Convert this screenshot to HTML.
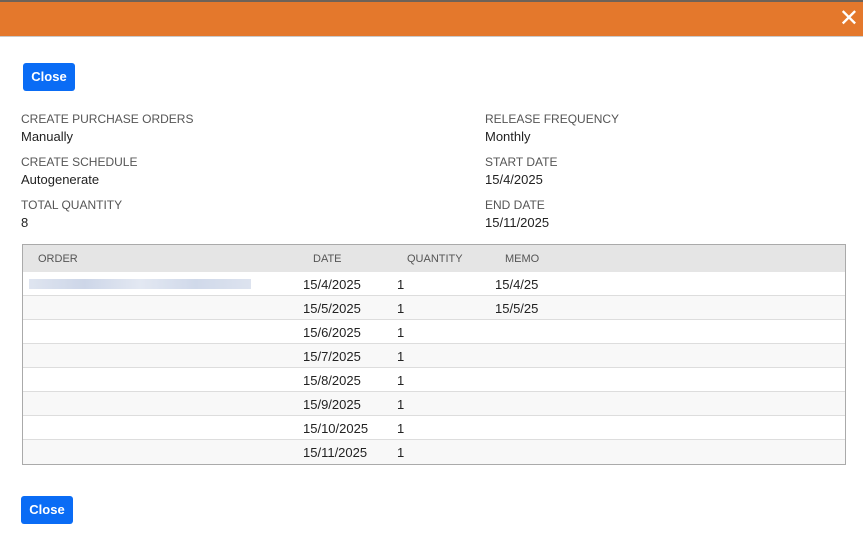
<!DOCTYPE html><html><head><style>
body{margin:0;width:863px;height:536px;background:#fff;font-family:"Liberation Sans",sans-serif;position:relative;overflow:hidden;color:#222}
.hd{position:absolute;left:0;top:0;width:863px;height:37px;background:#e4782c;border-top:2px solid #6e6258;box-sizing:border-box;border-bottom:1px solid #c9c9c9}
.x{position:absolute;right:4px;top:4px;color:#fff;font-size:24px;line-height:26px}
.btn{position:absolute;background:#0a6cf5;color:#fff;font-weight:bold;font-size:13px;border-radius:3px;text-align:center;line-height:28px;height:28px}
.l{position:absolute;font-size:12px;color:#555}
.v{position:absolute;font-size:13px;color:#222}
.tb{position:absolute;left:22px;top:244px;width:824px;border:1px solid #aaa;box-sizing:border-box}
.th{height:27px;background:#e5e5e5;position:relative}
.r{height:24px;border-bottom:1px solid #ddd;box-sizing:border-box;position:relative;font-size:13px}
.c{position:absolute;top:5px}
.h{position:absolute;top:8px;font-size:11px;color:#555}
</style></head><body>
<div class="hd"><span class="x">✕</span></div>
<div class="btn" style="left:23px;top:63px;width:52px">Close</div>
<div class="l" style="left:21px;top:112px">CREATE PURCHASE ORDERS</div><div class="v" style="left:21px;top:129px">Manually</div>
<div class="l" style="left:21px;top:155px">CREATE SCHEDULE</div><div class="v" style="left:21px;top:172px">Autogenerate</div>
<div class="l" style="left:21px;top:198px">TOTAL QUANTITY</div><div class="v" style="left:21px;top:215px">8</div>
<div class="l" style="left:485px;top:112px">RELEASE FREQUENCY</div><div class="v" style="left:485px;top:129px">Monthly</div>
<div class="l" style="left:485px;top:155px">START DATE</div><div class="v" style="left:485px;top:172px">15/4/2025</div>
<div class="l" style="left:485px;top:198px">END DATE</div><div class="v" style="left:485px;top:215px">15/11/2025</div>
<div class="tb">
<div class="th"><span class="h" style="left:15px">ORDER</span><span class="h" style="left:290px">DATE</span><span class="h" style="left:384px">QUANTITY</span><span class="h" style="left:482px">MEMO</span></div>
<div>
<div class="r" style="background:#fff"><span class="c" style="left:6px;top:7px;width:222px;height:10px;background:linear-gradient(90deg,#dfe5f0,#cdd6e8,#e3e8f2,#d0d9ea,#dde3ef)"></span><span class="c" style="left:280px">15/4/2025</span><span class="c" style="left:374px">1</span><span class="c" style="left:472px">15/4/25</span></div>
<div class="r" style="background:#f8f8f8"><span class="c" style="left:280px">15/5/2025</span><span class="c" style="left:374px">1</span><span class="c" style="left:472px">15/5/25</span></div>
<div class="r" style="background:#fff"><span class="c" style="left:280px">15/6/2025</span><span class="c" style="left:374px">1</span></div>
<div class="r" style="background:#f8f8f8"><span class="c" style="left:280px">15/7/2025</span><span class="c" style="left:374px">1</span></div>
<div class="r" style="background:#fff"><span class="c" style="left:280px">15/8/2025</span><span class="c" style="left:374px">1</span></div>
<div class="r" style="background:#f8f8f8"><span class="c" style="left:280px">15/9/2025</span><span class="c" style="left:374px">1</span></div>
<div class="r" style="background:#fff"><span class="c" style="left:280px">15/10/2025</span><span class="c" style="left:374px">1</span></div>
<div class="r" style="background:#f8f8f8;border-bottom:none"><span class="c" style="left:280px">15/11/2025</span><span class="c" style="left:374px">1</span></div>
</div></div>
<div class="btn" style="left:21px;top:496px;width:52px">Close</div>
</body></html>
